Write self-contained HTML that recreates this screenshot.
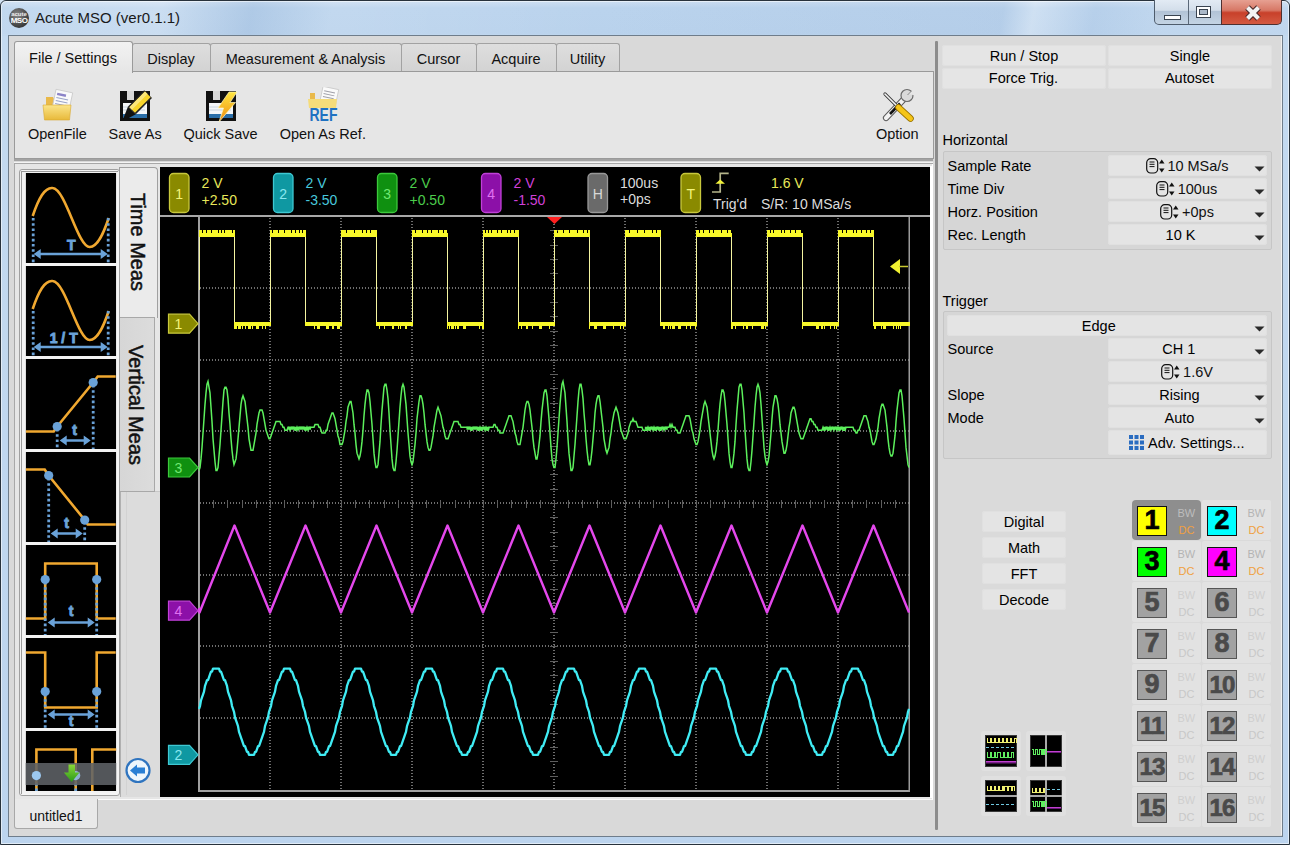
<!DOCTYPE html><html><head><meta charset="utf-8"><style>html,body{margin:0;padding:0;}body{width:1290px;height:845px;overflow:hidden;position:relative;font-family:"Liberation Sans",sans-serif;}svg text{font-family:"Liberation Sans",sans-serif;}</style></head><body><div style="position:absolute;left:0;top:0;width:1290px;height:845px;background:linear-gradient(180deg,#cfe0f2 0px,#bad3ed 8px,#b9d2ec 34px,#c4daf0 36px,#bcd4ee 845px);"></div>
<div style="position:absolute;left:0;top:0;width:1290px;height:35px;background:linear-gradient(100deg,rgba(255,255,255,0.1) 0px,rgba(255,255,255,0.25) 160px,rgba(150,180,215,0.3) 250px,rgba(255,255,255,0.12) 330px,rgba(255,255,255,0.0) 600px,rgba(170,195,225,0.3) 990px,rgba(255,255,255,0.3) 1020px,rgba(170,195,225,0.2) 1080px,rgba(255,255,255,0.1) 1150px);"></div>
<div style="position:absolute;left:0;top:0;width:1288px;height:843px;border:1px solid #28323c;border-radius:6px 6px 0 0;"></div>
<div style="position:absolute;left:1px;top:1px;width:1286px;height:841px;border:1px solid rgba(255,255,255,0.55);border-radius:5px 5px 0 0;"></div>
<div style="position:absolute;left:9px;top:8px;width:20px;height:20px;border-radius:50%;background:radial-gradient(circle at 40% 35%,#8a8a8a,#3a3a3a 70%);"></div>
<div style="position:absolute;left:9px;top:11px;width:20px;font-size:6px;line-height:6px;color:#eee;text-align:center;font-weight:bold;">acute</div>
<div style="position:absolute;left:9px;top:17px;width:20px;font-size:8px;line-height:8px;color:#fff;text-align:center;font-weight:bold;letter-spacing:-0.5px;">MSO</div>
<div style="position:absolute;left:35px;top:9.42px;font-size:15px;line-height:17.25px;color:#1a1a1a;white-space:pre;">Acute MSO (ver0.1.1)</div>
<div style="position:absolute;left:1154px;top:-1px;width:68px;height:25px;border:1px solid #4e5c6c;border-top:none;border-radius:0 0 0 5px;background:linear-gradient(180deg,#e4ecf5 0%,#d3deea 45%,#b2c3d6 50%,#c4d4e4 100%);"></div>
<div style="position:absolute;left:1188px;top:0px;width:1px;height:24px;background:#5a6878;"></div>
<div style="position:absolute;left:1221px;top:-1px;width:59px;height:25px;border:1px solid #4e3030;border-top:none;border-radius:0 0 5px 0;background:linear-gradient(180deg,#e8a496 0%,#d77866 45%,#c8402a 55%,#d45a42 100%);"></div>
<div style="position:absolute;left:1164px;top:15px;width:15px;height:3px;background:#fff;border:1px solid #3a4450;"></div>
<div style="position:absolute;left:1196px;top:6px;width:13px;height:10px;border:1px solid #3a4450;background:#fff;"></div>
<div style="position:absolute;left:1199px;top:9px;width:7px;height:4px;border:1px solid #3a4450;background:#aab8c8;"></div>
<svg style="position:absolute;left:1243px;top:4px;" width="20" height="18" viewBox="0 0 20 18"><path d="M4.5,3.5 L15.5,14.5 M15.5,3.5 L4.5,14.5" stroke="#4a2a2a" stroke-width="6.4" stroke-linecap="butt"/><path d="M4.5,3.5 L15.5,14.5 M15.5,3.5 L4.5,14.5" stroke="#f4f4f4" stroke-width="4.2" stroke-linecap="butt"/></svg>
<div style="position:absolute;left:8px;top:35px;width:1273px;height:800px;background:#d9d9d9;border:1px solid #6f7d8b;"></div>
<div style="position:absolute;left:14px;top:71px;width:918px;height:86px;background:#e6e6e6;border:1px solid #9a9a9a;"></div>
<div style="position:absolute;left:132px;top:43px;width:77px;height:27px;border:1px solid #a2a2a2;border-bottom:none;border-radius:3px 3px 0 0;background:linear-gradient(180deg,#dedede,#d3d3d3);"></div>
<div style="position:absolute;left:-29px;width:400px;text-align:center;top:50.88px;font-size:14.5px;line-height:16.67px;color:#111;white-space:pre;">Display</div>
<div style="position:absolute;left:210px;top:43px;width:190px;height:27px;border:1px solid #a2a2a2;border-bottom:none;border-radius:3px 3px 0 0;background:linear-gradient(180deg,#dedede,#d3d3d3);"></div>
<div style="position:absolute;left:105.5px;width:400px;text-align:center;top:50.88px;font-size:14.5px;line-height:16.67px;color:#111;white-space:pre;">Measurement &amp; Analysis</div>
<div style="position:absolute;left:401px;top:43px;width:74px;height:27px;border:1px solid #a2a2a2;border-bottom:none;border-radius:3px 3px 0 0;background:linear-gradient(180deg,#dedede,#d3d3d3);"></div>
<div style="position:absolute;left:238.5px;width:400px;text-align:center;top:50.88px;font-size:14.5px;line-height:16.67px;color:#111;white-space:pre;">Cursor</div>
<div style="position:absolute;left:476px;top:43px;width:79px;height:27px;border:1px solid #a2a2a2;border-bottom:none;border-radius:3px 3px 0 0;background:linear-gradient(180deg,#dedede,#d3d3d3);"></div>
<div style="position:absolute;left:316px;width:400px;text-align:center;top:50.88px;font-size:14.5px;line-height:16.67px;color:#111;white-space:pre;">Acquire</div>
<div style="position:absolute;left:556px;top:43px;width:62px;height:27px;border:1px solid #a2a2a2;border-bottom:none;border-radius:3px 3px 0 0;background:linear-gradient(180deg,#dedede,#d3d3d3);"></div>
<div style="position:absolute;left:387.5px;width:400px;text-align:center;top:50.88px;font-size:14.5px;line-height:16.67px;color:#111;white-space:pre;">Utility</div>
<div style="position:absolute;left:14px;top:41px;width:117px;height:31px;border:1px solid #9a9a9a;border-bottom:none;border-radius:3px 3px 0 0;background:linear-gradient(180deg,#f2f2f2,#e6e6e6);"></div>
<div style="position:absolute;left:-127px;width:400px;text-align:center;top:49.88px;font-size:14.5px;line-height:16.67px;color:#111;white-space:pre;">File / Settings</div>
<div style="position:absolute;left:-142.6px;width:400px;text-align:center;top:125.88px;font-size:14.5px;line-height:16.67px;color:#111;white-space:pre;">OpenFile</div>
<div style="position:absolute;left:-64.9px;width:400px;text-align:center;top:125.88px;font-size:14.5px;line-height:16.67px;color:#111;white-space:pre;">Save As</div>
<div style="position:absolute;left:20.5px;width:400px;text-align:center;top:125.88px;font-size:14.5px;line-height:16.67px;color:#111;white-space:pre;">Quick Save</div>
<div style="position:absolute;left:122.8px;width:400px;text-align:center;top:125.88px;font-size:14.5px;line-height:16.67px;color:#111;white-space:pre;">Open As Ref.</div>
<div style="position:absolute;left:697.3px;width:400px;text-align:center;top:125.88px;font-size:14.5px;line-height:16.67px;color:#111;white-space:pre;">Option</div>
<svg style="position:absolute;left:40px;top:88px;" width="36" height="36" viewBox="0 0 36 36">
<defs><linearGradient id="fold" x1="0" y1="0" x2="0" y2="1"><stop offset="0" stop-color="#fbe58a"/><stop offset="1" stop-color="#e8b93a"/></linearGradient></defs>
<path d="M6,9 h7 l1,2 h4 v8 h-12z" fill="#e9b94a"/>
<g transform="rotate(12 23 12)"><rect x="14" y="3" width="17" height="18" fill="#fafafa" stroke="#c8c8c8" stroke-width="0.8"/>
<rect x="16" y="6" width="9" height="2.5" fill="#8c84c8"/><path d="M16,11h12M16,14h12M16,17h12" stroke="#9aa4c8" stroke-width="1"/></g>
<path d="M3,17 h28 l-1.5,15 h-25z" fill="url(#fold)" stroke="#d9a830" stroke-width="0.6"/>
</svg>
<svg style="position:absolute;left:118px;top:89px;" width="36" height="36" viewBox="0 0 36 36">
<rect x="2" y="2" width="30" height="30" fill="#111"/>
<rect x="9" y="2" width="7" height="9" fill="#d8d8d8"/>
<rect x="5" y="14" width="24" height="15" fill="#f4f6f8"/>
<rect x="5" y="25" width="24" height="4" fill="#2a6ea8"/>
<path d="M5,18h22M5,21h22" stroke="#c8d4e0" stroke-width="1"/>
<path d="M26.2,1.2 L34,9 L17.8,25.2 L10,17.4z" fill="#222"/>
<path d="M27,2.6 L32.6,8.2 L17,23.8 L11.4,18.2z" fill="#f7d52c"/>
<path d="M27,2.6 L29.5,5.1 L13.9,20.7 L11.4,18.2z" fill="#fbe77a"/>
<path d="M10,17.4 L17.8,25.2 L9,30 L5.5,29z" fill="#111"/>
</svg>
<svg style="position:absolute;left:204px;top:89px;" width="36" height="36" viewBox="0 0 36 36">
<rect x="2" y="2" width="30" height="30" fill="#111"/>
<rect x="9" y="2" width="7" height="9" fill="#d8d8d8"/>
<rect x="5" y="14" width="24" height="15" fill="#f4f6f8"/>
<rect x="5" y="25" width="24" height="4" fill="#2a6ea8"/>
<path d="M5,18h22M5,21h22" stroke="#c8d4e0" stroke-width="1"/>
<defs><linearGradient id="bolt" x1="0" y1="0" x2="0" y2="1"><stop offset="0" stop-color="#ffe640"/><stop offset="1" stop-color="#f08c10"/></linearGradient></defs>
<path d="M25,3 L33,3 L26,13.5 L31.5,13.5 L15,33 L19.5,19 L14,19z" fill="url(#bolt)" stroke="#fff8c0" stroke-width="0.7"/>
</svg>
<svg style="position:absolute;left:306px;top:87px;" width="36" height="36" viewBox="0 0 36 36">
<path d="M4,6 h5 v6 h-5z" fill="#e9b94a"/>
<g transform="rotate(12 24 10)"><rect x="15" y="1" width="16" height="16" fill="#fafafa" stroke="#c8c8c8" stroke-width="0.8"/>
<path d="M17,5h11M17,8h11M17,11h11" stroke="#a0a0a8" stroke-width="1"/></g>
<path d="M2,12 h29 l-1,9 h-27z" fill="#f5dc7a"/>
<text x="17.5" y="34" text-anchor="middle" font-family="Liberation Sans" font-weight="bold" font-size="18" fill="#1f72c2" textLength="28" lengthAdjust="spacingAndGlyphs">REF</text>
</svg>
<svg style="position:absolute;left:878px;top:88px;" width="38" height="36" viewBox="0 0 38 36">
<path d="M26,11 L8,30" stroke="#5a5a5a" stroke-width="6.2" stroke-linecap="round"/>
<path d="M26,11 L8,30" stroke="#f2f2f2" stroke-width="4.2" stroke-linecap="round"/>
<path d="M22,15.5 L12,26" stroke="#111" stroke-width="2.6"/>
<circle cx="29" cy="7.5" r="6" fill="#dadada" stroke="#6a6a6a" stroke-width="1.2"/>
<path d="M30.5,6 L37,-0.5 L39,8 z" fill="#e6e6e6"/>
<path d="M29.5,7 l4,-4" stroke="#8a8a8a" stroke-width="1"/>
<path d="M7,6 L21,20" stroke="#3a3a3a" stroke-width="3.2" stroke-linecap="round"/>
<path d="M7,6 L21,20" stroke="#f4f4f4" stroke-width="1.6" stroke-linecap="round"/>
<path d="M20.5,19.5 L32.5,30.5" stroke="#9a7400" stroke-width="6.6" stroke-linecap="round"/>
<path d="M20.5,19.5 L32.5,30.5" stroke="#f5c518" stroke-width="5" stroke-linecap="round"/>
</svg>
<div style="position:absolute;left:14px;top:159px;width:919px;height:2px;background:#a3a3a3;"></div>
<div style="position:absolute;left:14px;top:162px;width:919px;height:1px;background:#f4f4f4;"></div>
<div style="position:absolute;left:14px;top:163px;width:917px;height:635px;border:1px solid #a8a8a8;background:#e6e6e6;"></div>
<div style="position:absolute;left:15px;top:164px;width:917px;height:635px;border-right:1px solid #fff;border-bottom:1px solid #fafafa;"></div>
<div style="position:absolute;left:935px;top:41px;width:3px;height:789px;background:#8c8c8c;border-radius:1px;"></div>
<div style="position:absolute;left:19px;top:169px;width:99px;height:625px;border:1px solid #a0a0a0;border-radius:3px;background:#f4f4f4;"></div>
<div style="position:absolute;left:21px;top:171px;width:96px;height:622px;border-left:1px solid #9a9a9a;border-top:1px solid #9a9a9a;"></div>
<svg style="position:absolute;left:22px;top:172px;" width="95" height="621" viewBox="0 1 95 621"><rect x="0" y="0" width="96" height="622" fill="#f2f2f2"/><svg x="3.7" y="2" width="90.5" height="90" viewBox="0 0 90.5 90"><rect width="90.5" height="90" fill="#000"/><path d="M7,43 C13,25 19,14 27,15 C40,16 52,74 64,74 C72,74 78,60 83,45" fill="none" stroke="#f0a830" stroke-width="2.6"/><path d="M7.5,45 V90" stroke="#6aa2d8" stroke-width="2.8" stroke-dasharray="2.6,2.6"/><path d="M82.5,45 V90" stroke="#6aa2d8" stroke-width="2.8" stroke-dasharray="2.6,2.6"/><path d="M12,81 H78" stroke="#6aa2d8" stroke-width="2.6"/><path d="M8,81 l7,-5 v10z M82,81 l-7,-5 v10z" fill="#6aa2d8"/><text x="45.5" y="77" text-anchor="middle" font-family="Liberation Sans" font-weight="bold" font-size="14" fill="#6aa2d8" stroke="#6aa2d8" stroke-width="0.9">T</text></svg><svg x="3.7" y="95" width="90.5" height="90" viewBox="0 0 90.5 90"><rect width="90.5" height="90" fill="#000"/><path d="M7,43 C13,25 19,14 27,15 C40,16 52,74 64,74 C72,74 78,60 83,45" fill="none" stroke="#f0a830" stroke-width="2.6"/><path d="M7.5,45 V90" stroke="#6aa2d8" stroke-width="2.8" stroke-dasharray="2.6,2.6"/><path d="M82.5,45 V90" stroke="#6aa2d8" stroke-width="2.8" stroke-dasharray="2.6,2.6"/><path d="M12,81 H78" stroke="#6aa2d8" stroke-width="2.6"/><path d="M8,81 l7,-5 v10z M82,81 l-7,-5 v10z" fill="#6aa2d8"/><text x="38" y="77" text-anchor="middle" font-family="Liberation Sans" font-weight="bold" font-size="14" fill="#6aa2d8" stroke="#6aa2d8" stroke-width="0.9">1 / T</text></svg><svg x="3.7" y="188" width="90.5" height="90" viewBox="0 0 90.5 90"><rect width="90.5" height="90" fill="#000"/><path d="M0,72.5 H28 L31.5,67.5 L67.5,23.5 L72,17.5 H90" fill="none" stroke="#f0a830" stroke-width="2.6"/><path d="M31.5,70 V90" stroke="#6aa2d8" stroke-width="2.8" stroke-dasharray="2.6,2.6"/><path d="M67.5,26 V90" stroke="#6aa2d8" stroke-width="2.8" stroke-dasharray="2.6,2.6"/><circle cx="31.5" cy="67.5" r="4.6" fill="#6aa2d8"/><circle cx="67.5" cy="23.5" r="4.6" fill="#6aa2d8"/><path d="M38,81.5 H61" stroke="#6aa2d8" stroke-width="2.6"/><path d="M34,81.5 l7,-5 v10z M65,81.5 l-7,-5 v10z" fill="#6aa2d8"/><text x="49" y="76" text-anchor="middle" font-family="Liberation Sans" font-weight="bold" font-size="14" fill="#6aa2d8" stroke="#6aa2d8" stroke-width="0.9">t</text></svg><svg x="3.7" y="281" width="90.5" height="90" viewBox="0 0 90.5 90"><rect width="90.5" height="90" fill="#000"/><path d="M0,17.5 H19 L23,23.5 L59,68 L62,72.5 H90" fill="none" stroke="#f0a830" stroke-width="2.6"/><path d="M23,26 V90" stroke="#6aa2d8" stroke-width="2.8" stroke-dasharray="2.6,2.6"/><path d="M59,70 V90" stroke="#6aa2d8" stroke-width="2.8" stroke-dasharray="2.6,2.6"/><circle cx="23" cy="23.5" r="4.6" fill="#6aa2d8"/><circle cx="59" cy="68" r="4.6" fill="#6aa2d8"/><path d="M29,81.5 H53" stroke="#6aa2d8" stroke-width="2.6"/><path d="M25,81.5 l7,-5 v10z M57,81.5 l-7,-5 v10z" fill="#6aa2d8"/><text x="41" y="76" text-anchor="middle" font-family="Liberation Sans" font-weight="bold" font-size="14" fill="#6aa2d8" stroke="#6aa2d8" stroke-width="0.9">t</text></svg><svg x="3.7" y="374" width="90.5" height="90" viewBox="0 0 90.5 90"><rect width="90.5" height="90" fill="#000"/><path d="M0,73.5 H19.5 V18.5 H71 V73.5 H90" fill="none" stroke="#f0a830" stroke-width="2.6"/><path d="M19.5,37 V90" stroke="#6aa2d8" stroke-width="2.8" stroke-dasharray="2.6,2.6"/><path d="M71,37 V90" stroke="#6aa2d8" stroke-width="2.8" stroke-dasharray="2.6,2.6"/><circle cx="19.5" cy="34.5" r="4.6" fill="#6aa2d8"/><circle cx="71" cy="34.5" r="4.6" fill="#6aa2d8"/><path d="M26,77.5 H65" stroke="#6aa2d8" stroke-width="2.6"/><path d="M22,77.5 l7,-5 v10z M69,77.5 l-7,-5 v10z" fill="#6aa2d8"/><text x="45.5" y="71" text-anchor="middle" font-family="Liberation Sans" font-weight="bold" font-size="14" fill="#6aa2d8" stroke="#6aa2d8" stroke-width="0.9">t</text></svg><svg x="3.7" y="467" width="90.5" height="90" viewBox="0 0 90.5 90"><rect width="90.5" height="90" fill="#000"/><path d="M0,14.5 H19.5 V69.5 H71 V14.5 H90" fill="none" stroke="#f0a830" stroke-width="2.6"/><path d="M19.5,56 V90" stroke="#6aa2d8" stroke-width="2.8" stroke-dasharray="2.6,2.6"/><path d="M71,56 V90" stroke="#6aa2d8" stroke-width="2.8" stroke-dasharray="2.6,2.6"/><circle cx="19.5" cy="53.5" r="4.6" fill="#6aa2d8"/><circle cx="71" cy="53.5" r="4.6" fill="#6aa2d8"/><path d="M26,76.5 H65" stroke="#6aa2d8" stroke-width="2.6"/><path d="M22,76.5 l7,-5 v10z M69,76.5 l-7,-5 v10z" fill="#6aa2d8"/><text x="45.5" y="88" text-anchor="middle" font-family="Liberation Sans" font-weight="bold" font-size="14" fill="#6aa2d8" stroke="#6aa2d8" stroke-width="0.9">t</text></svg><svg x="3.7" y="560" width="90.5" height="60" viewBox="0 0 90.5 60"><rect width="90.5" height="60" fill="#000"/><path d="M10.7,90 V18.5 H50 V90 M66.6,90 V18.5 H92" fill="none" stroke="#f0a830" stroke-width="2.6"/><path d="M10.7,47 V90" stroke="#6aa2d8" stroke-width="2.8" stroke-dasharray="2.6,2.6"/><path d="M50,47 V90" stroke="#6aa2d8" stroke-width="2.8" stroke-dasharray="2.6,2.6"/></svg><rect x="3.7" y="592" width="90.5" height="22" fill="#5e6266" fill-opacity="0.88"/><circle cx="14.4" cy="604.6" r="4.6" fill="#9cc8f0"/><circle cx="53.7" cy="604.6" r="4.6" fill="#9cc8f0" fill-opacity="0.8"/><defs><linearGradient id="garr" x1="0" y1="0" x2="0" y2="1"><stop offset="0" stop-color="#8ad838"/><stop offset="1" stop-color="#2a9a18"/></linearGradient></defs><path d="M46.5,593.5 h6.5 v8 h4.5 l-7.8,9.5 l-7.8,-9.5 h4.6z" fill="url(#garr)"/></svg>
<div style="position:absolute;left:119px;top:167px;width:37px;height:150px;border:1px solid #a0a0a0;border-bottom:none;border-radius:0 4px 0 0;background:#ebebeb;"></div>
<div style="position:absolute;left:120px;top:491px;width:39px;height:305px;border-left:1px solid #b0b0b0;border-top:1px solid #c8c8c8;background:#dcdcdc;"></div>
<div style="position:absolute;left:126px;top:492px;width:1px;height:303px;background:#d2d2d2;"></div>
<div style="position:absolute;left:120px;top:317px;width:34px;height:173px;border:1px solid #a8a8a8;border-left:none;background:linear-gradient(90deg,#d6d6d6,#dcdcdc);"></div>
<div style="position:absolute;left:137.5px;top:242px;width:0;height:0;"><div style="position:absolute;left:-60px;top:-12px;width:120px;text-align:center;transform:rotate(90deg);font-size:20px;line-height:24px;color:#111;white-space:pre;-webkit-text-stroke:0.5px #111;">Time Meas</div></div>
<div style="position:absolute;left:136px;top:405px;width:0;height:0;"><div style="position:absolute;left:-80px;top:-12px;width:160px;text-align:center;transform:rotate(90deg);font-size:20px;line-height:24px;color:#111;white-space:pre;-webkit-text-stroke:0.5px #111;">Vertical Meas</div></div>
<svg style="position:absolute;left:124px;top:757px;" width="28" height="28" viewBox="0 0 28 28">
<circle cx="14" cy="13.5" r="11.5" fill="#eef6fc" stroke="#2f74bf" stroke-width="2.2"/>
<path d="M6,13.5 L13,7.5 V10.5 H21 V16.5 H13 V19.5z" fill="#2a7fd4"/>
</svg>
<div style="position:absolute;left:14px;top:799px;width:82px;height:29px;border:1px solid #a8a8a8;border-top:none;border-radius:0 0 3px 3px;background:#e9e9e9;"></div>
<div style="position:absolute;left:29.5px;top:808.33px;font-size:14px;line-height:16.1px;color:#111;white-space:pre;">untitled1</div>
<svg style="position:absolute;left:160px;top:167px;" width="770" height="630" viewBox="160 167 770 630"><rect x="160" y="167" width="770" height="630" fill="#000"/><rect x="169.5" y="173.5" width="19.5" height="39" rx="4" fill="#8a8a00" stroke="#c8c83c" stroke-width="1.3"/><text x="179.25" y="198.5" text-anchor="middle" font-family="Liberation Sans" font-size="14" fill="#f4f47a">1</text><text x="201.5" y="188" font-family="Liberation Sans" font-size="14" fill="#e8e85a" xml:space="preserve">2 V</text><text x="201.5" y="204.5" font-family="Liberation Sans" font-size="14" fill="#e8e85a" xml:space="preserve">+2.50</text><rect x="273.5" y="173.5" width="19.5" height="39" rx="4" fill="#0f98a2" stroke="#3ec8d2" stroke-width="1.3"/><text x="283.25" y="198.5" text-anchor="middle" font-family="Liberation Sans" font-size="14" fill="#8ae8f0">2</text><text x="305.5" y="188" font-family="Liberation Sans" font-size="14" fill="#48c8dc" xml:space="preserve">2 V</text><text x="305.5" y="204.5" font-family="Liberation Sans" font-size="14" fill="#48c8dc" xml:space="preserve">-3.50</text><rect x="377.5" y="173.5" width="19.5" height="39" rx="4" fill="#0f9010" stroke="#3cc83c" stroke-width="1.3"/><text x="387.25" y="198.5" text-anchor="middle" font-family="Liberation Sans" font-size="14" fill="#70e870">3</text><text x="409.5" y="188" font-family="Liberation Sans" font-size="14" fill="#4ccc4c" xml:space="preserve">2 V</text><text x="409.5" y="204.5" font-family="Liberation Sans" font-size="14" fill="#4ccc4c" xml:space="preserve">+0.50</text><rect x="481.5" y="173.5" width="19.5" height="39" rx="4" fill="#8c10a8" stroke="#c040d8" stroke-width="1.3"/><text x="491.25" y="198.5" text-anchor="middle" font-family="Liberation Sans" font-size="14" fill="#e070f0">4</text><text x="513.5" y="188" font-family="Liberation Sans" font-size="14" fill="#d040d8" xml:space="preserve">2 V</text><text x="513.5" y="204.5" font-family="Liberation Sans" font-size="14" fill="#d040d8" xml:space="preserve">-1.50</text><rect x="588.0" y="173.5" width="19.5" height="39" rx="4" fill="#6a6a6a" stroke="#989898" stroke-width="1.3"/><text x="597.75" y="198.5" text-anchor="middle" font-family="Liberation Sans" font-size="14" fill="#d8d8d8">H</text><text x="620" y="188" font-family="Liberation Sans" font-size="14" fill="#dcdcdc" xml:space="preserve">100us</text><text x="620" y="204" font-family="Liberation Sans" font-size="14" fill="#dcdcdc" xml:space="preserve">+0ps</text><rect x="681.0" y="173.5" width="19.5" height="39" rx="4" fill="#8a8a00" stroke="#c8c83c" stroke-width="1.3"/><text x="690.75" y="198.5" text-anchor="middle" font-family="Liberation Sans" font-size="14" fill="#f4f47a">T</text><path d="M712,192 h8.2 v-18.7 h8.5" fill="none" stroke="#b4b48a" stroke-width="1.7"/><path d="M720.2,179.5 l-4.8,4.2 h9.6z" fill="#f2f23a"/><text x="713" y="209" font-family="Liberation Sans" font-size="14" fill="#dcdcdc" xml:space="preserve">Trig'd</text><text x="771" y="188" font-family="Liberation Sans" font-size="14" fill="#e8e85a" xml:space="preserve">1.6 V</text><text x="761" y="209" font-family="Liberation Sans" font-size="14" fill="#dcdcdc" xml:space="preserve">S/R: 10 MSa/s</text><rect x="160" y="215" width="770" height="2" fill="#a8a8a8"/><path d="M270,218V790M341,218V790M412,218V790M483,218V790M554,218V790M625,218V790M696,218V790M767,218V790M838,218V790" stroke="#6e6e6e" stroke-width="2" stroke-dasharray="1,2" shape-rendering="crispEdges"/><path d="M200,288H909M200,360H909M200,431H909M200,503H909M200,575H909M200,646H909M200,718H909" stroke="#6e6e6e" stroke-width="2" stroke-dasharray="1,2" shape-rendering="crispEdges"/><path d="M550,230.5h8M550,245.5h8M550,259.5h8M550,273.5h8M550,288.5h8M550,302.5h8M550,316.5h8M550,331.5h8M550,345.5h8M550,360.5h8M550,374.5h8M550,388.5h8M550,403.5h8M550,417.5h8M550,431.5h8M550,446.5h8M550,460.5h8M550,474.5h8M550,489.5h8M550,503.5h8M550,517.5h8M550,532.5h8M550,546.5h8M550,560.5h8M550,575.5h8M550,589.5h8M550,603.5h8M550,618.5h8M550,632.5h8M550,646.5h8M550,661.5h8M550,675.5h8M550,690.5h8M550,704.5h8M550,718.5h8M550,733.5h8M550,747.5h8M550,761.5h8M550,776.5h8M213.5,500v8M227.5,500v8M242.5,500v8M256.5,500v8M270.5,500v8M284.5,500v8M298.5,500v8M313.5,500v8M327.5,500v8M341.5,500v8M355.5,500v8M369.5,500v8M384.5,500v8M398.5,500v8M412.5,500v8M426.5,500v8M440.5,500v8M455.5,500v8M469.5,500v8M483.5,500v8M497.5,500v8M511.5,500v8M526.5,500v8M540.5,500v8M554.5,500v8M568.5,500v8M582.5,500v8M597.5,500v8M611.5,500v8M625.5,500v8M639.5,500v8M653.5,500v8M668.5,500v8M682.5,500v8M696.5,500v8M710.5,500v8M724.5,500v8M739.5,500v8M753.5,500v8M767.5,500v8M781.5,500v8M795.5,500v8M810.5,500v8M824.5,500v8M838.5,500v8M852.5,500v8M866.5,500v8M881.5,500v8M895.5,500v8" stroke="#5e5e5e" stroke-width="1" shape-rendering="crispEdges"/><rect x="198" y="217" width="2" height="575" fill="#a0a0a0"/><rect x="198" y="790" width="712" height="2" fill="#a0a0a0"/><rect x="908.5" y="217" width="1.5" height="575" fill="#9a9a9a"/><path d="M547,217 h15 l-7.5,7z" fill="#ff2020"/><path d="M199,608L199.5,612.5 234.5,525.5 270,612.5 305.5,525.5 341,612.5 376.5,525.5 412,612.5 447.5,525.5 483,612.5 518.5,525.5 554,612.5 589.5,525.5 625,612.5 660.5,525.5 696,612.5 731.5,525.5 767,612.5 802.5,525.5 838,612.5 873.5,525.5 909,612.5" fill="none" stroke="#e448ec" stroke-width="2.4" stroke-linejoin="round"/><path d="M199,708.89L200,706.02 201,700.28 202,697.41 203,694.54 204,691.67 205,685.93 206,683.06 207,680.19 208,680.19 209,677.32 210,674.45 211,671.58 212,671.58 213,668.71 214,668.71 215,668.71 216,668.71 217,668.71 218,668.71 219,668.71 220,671.58 221,671.58 222,674.45 223,677.32 224,680.19 225,680.19 226,683.06 227,685.93 228,691.67 229,694.54 230,697.41 231,700.28 232,706.02 233,708.89 234,711.76 235,717.5 236,720.37 237,723.24 238,726.11 239,731.85 240,734.72 241,737.59 242,740.46 243,743.33 244,746.2 245,746.2 246,749.07 247,751.94 248,751.94 249,754.81 250,754.81 251,754.81 252,754.81 253,754.81 254,754.81 255,751.94 256,751.94 257,749.07 258,746.2 259,746.2 260,743.33 261,740.46 262,737.59 263,734.72 264,731.85 265,726.11 266,723.24 267,720.37 268,717.5 269,711.76 270,708.89 271,706.02 272,700.28 273,697.41 274,694.54 275,691.67 276,685.93 277,683.06 278,680.19 279,680.19 280,677.32 281,674.45 282,671.58 283,671.58 284,668.71 285,668.71 286,668.71 287,668.71 288,668.71 289,668.71 290,668.71 291,671.58 292,671.58 293,674.45 294,677.32 295,680.19 296,680.19 297,683.06 298,685.93 299,691.67 300,694.54 301,697.41 302,700.28 303,706.02 304,708.89 305,711.76 306,717.5 307,720.37 308,723.24 309,726.11 310,731.85 311,734.72 312,737.59 313,740.46 314,743.33 315,746.2 316,746.2 317,749.07 318,751.94 319,751.94 320,754.81 321,754.81 322,754.81 323,754.81 324,754.81 325,754.81 326,751.94 327,751.94 328,749.07 329,746.2 330,746.2 331,743.33 332,740.46 333,737.59 334,734.72 335,731.85 336,726.11 337,723.24 338,720.37 339,717.5 340,711.76 341,708.89 342,706.02 343,700.28 344,697.41 345,694.54 346,691.67 347,685.93 348,683.06 349,680.19 350,680.19 351,677.32 352,674.45 353,671.58 354,671.58 355,668.71 356,668.71 357,668.71 358,668.71 359,668.71 360,668.71 361,668.71 362,671.58 363,671.58 364,674.45 365,677.32 366,680.19 367,680.19 368,683.06 369,685.93 370,691.67 371,694.54 372,697.41 373,700.28 374,706.02 375,708.89 376,711.76 377,717.5 378,720.37 379,723.24 380,726.11 381,731.85 382,734.72 383,737.59 384,740.46 385,743.33 386,746.2 387,746.2 388,749.07 389,751.94 390,751.94 391,754.81 392,754.81 393,754.81 394,754.81 395,754.81 396,754.81 397,751.94 398,751.94 399,749.07 400,746.2 401,746.2 402,743.33 403,740.46 404,737.59 405,734.72 406,731.85 407,726.11 408,723.24 409,720.37 410,717.5 411,711.76 412,708.89 413,706.02 414,700.28 415,697.41 416,694.54 417,691.67 418,685.93 419,683.06 420,680.19 421,680.19 422,677.32 423,674.45 424,671.58 425,671.58 426,668.71 427,668.71 428,668.71 429,668.71 430,668.71 431,668.71 432,668.71 433,671.58 434,671.58 435,674.45 436,677.32 437,680.19 438,680.19 439,683.06 440,685.93 441,691.67 442,694.54 443,697.41 444,700.28 445,706.02 446,708.89 447,711.76 448,717.5 449,720.37 450,723.24 451,726.11 452,731.85 453,734.72 454,737.59 455,740.46 456,743.33 457,746.2 458,746.2 459,749.07 460,751.94 461,751.94 462,754.81 463,754.81 464,754.81 465,754.81 466,754.81 467,754.81 468,751.94 469,751.94 470,749.07 471,746.2 472,746.2 473,743.33 474,740.46 475,737.59 476,734.72 477,731.85 478,726.11 479,723.24 480,720.37 481,717.5 482,711.76 483,708.89 484,706.02 485,700.28 486,697.41 487,694.54 488,691.67 489,685.93 490,683.06 491,680.19 492,680.19 493,677.32 494,674.45 495,671.58 496,671.58 497,668.71 498,668.71 499,668.71 500,668.71 501,668.71 502,668.71 503,668.71 504,671.58 505,671.58 506,674.45 507,677.32 508,680.19 509,680.19 510,683.06 511,685.93 512,691.67 513,694.54 514,697.41 515,700.28 516,706.02 517,708.89 518,711.76 519,717.5 520,720.37 521,723.24 522,726.11 523,731.85 524,734.72 525,737.59 526,740.46 527,743.33 528,746.2 529,746.2 530,749.07 531,751.94 532,751.94 533,754.81 534,754.81 535,754.81 536,754.81 537,754.81 538,754.81 539,751.94 540,751.94 541,749.07 542,746.2 543,746.2 544,743.33 545,740.46 546,737.59 547,734.72 548,731.85 549,726.11 550,723.24 551,720.37 552,717.5 553,711.76 554,708.89 555,706.02 556,700.28 557,697.41 558,694.54 559,691.67 560,685.93 561,683.06 562,680.19 563,680.19 564,677.32 565,674.45 566,671.58 567,671.58 568,668.71 569,668.71 570,668.71 571,668.71 572,668.71 573,668.71 574,668.71 575,671.58 576,671.58 577,674.45 578,677.32 579,680.19 580,680.19 581,683.06 582,685.93 583,691.67 584,694.54 585,697.41 586,700.28 587,706.02 588,708.89 589,711.76 590,717.5 591,720.37 592,723.24 593,726.11 594,731.85 595,734.72 596,737.59 597,740.46 598,743.33 599,746.2 600,746.2 601,749.07 602,751.94 603,751.94 604,754.81 605,754.81 606,754.81 607,754.81 608,754.81 609,754.81 610,751.94 611,751.94 612,749.07 613,746.2 614,746.2 615,743.33 616,740.46 617,737.59 618,734.72 619,731.85 620,726.11 621,723.24 622,720.37 623,717.5 624,711.76 625,708.89 626,706.02 627,700.28 628,697.41 629,694.54 630,691.67 631,685.93 632,683.06 633,680.19 634,680.19 635,677.32 636,674.45 637,671.58 638,671.58 639,668.71 640,668.71 641,668.71 642,668.71 643,668.71 644,668.71 645,668.71 646,671.58 647,671.58 648,674.45 649,677.32 650,680.19 651,680.19 652,683.06 653,685.93 654,691.67 655,694.54 656,697.41 657,700.28 658,706.02 659,708.89 660,711.76 661,717.5 662,720.37 663,723.24 664,726.11 665,731.85 666,734.72 667,737.59 668,740.46 669,743.33 670,746.2 671,746.2 672,749.07 673,751.94 674,751.94 675,754.81 676,754.81 677,754.81 678,754.81 679,754.81 680,754.81 681,751.94 682,751.94 683,749.07 684,746.2 685,746.2 686,743.33 687,740.46 688,737.59 689,734.72 690,731.85 691,726.11 692,723.24 693,720.37 694,717.5 695,711.76 696,708.89 697,706.02 698,700.28 699,697.41 700,694.54 701,691.67 702,685.93 703,683.06 704,680.19 705,680.19 706,677.32 707,674.45 708,671.58 709,671.58 710,668.71 711,668.71 712,668.71 713,668.71 714,668.71 715,668.71 716,668.71 717,671.58 718,671.58 719,674.45 720,677.32 721,680.19 722,680.19 723,683.06 724,685.93 725,691.67 726,694.54 727,697.41 728,700.28 729,706.02 730,708.89 731,711.76 732,717.5 733,720.37 734,723.24 735,726.11 736,731.85 737,734.72 738,737.59 739,740.46 740,743.33 741,746.2 742,746.2 743,749.07 744,751.94 745,751.94 746,754.81 747,754.81 748,754.81 749,754.81 750,754.81 751,754.81 752,751.94 753,751.94 754,749.07 755,746.2 756,746.2 757,743.33 758,740.46 759,737.59 760,734.72 761,731.85 762,726.11 763,723.24 764,720.37 765,717.5 766,711.76 767,708.89 768,706.02 769,700.28 770,697.41 771,694.54 772,691.67 773,685.93 774,683.06 775,680.19 776,680.19 777,677.32 778,674.45 779,671.58 780,671.58 781,668.71 782,668.71 783,668.71 784,668.71 785,668.71 786,668.71 787,668.71 788,671.58 789,671.58 790,674.45 791,677.32 792,680.19 793,680.19 794,683.06 795,685.93 796,691.67 797,694.54 798,697.41 799,700.28 800,706.02 801,708.89 802,711.76 803,717.5 804,720.37 805,723.24 806,726.11 807,731.85 808,734.72 809,737.59 810,740.46 811,743.33 812,746.2 813,746.2 814,749.07 815,751.94 816,751.94 817,754.81 818,754.81 819,754.81 820,754.81 821,754.81 822,754.81 823,751.94 824,751.94 825,749.07 826,746.2 827,746.2 828,743.33 829,740.46 830,737.59 831,734.72 832,731.85 833,726.11 834,723.24 835,720.37 836,717.5 837,711.76 838,708.89 839,706.02 840,700.28 841,697.41 842,694.54 843,691.67 844,685.93 845,683.06 846,680.19 847,680.19 848,677.32 849,674.45 850,671.58 851,671.58 852,668.71 853,668.71 854,668.71 855,668.71 856,668.71 857,668.71 858,668.71 859,671.58 860,671.58 861,674.45 862,677.32 863,680.19 864,680.19 865,683.06 866,685.93 867,691.67 868,694.54 869,697.41 870,700.28 871,706.02 872,708.89 873,711.76 874,717.5 875,720.37 876,723.24 877,726.11 878,731.85 879,734.72 880,737.59 881,740.46 882,743.33 883,746.2 884,746.2 885,749.07 886,751.94 887,751.94 888,754.81 889,754.81 890,754.81 891,754.81 892,754.81 893,754.81 894,751.94 895,751.94 896,749.07 897,746.2 898,746.2 899,743.33 900,740.46 901,737.59 902,734.72 903,731.85 904,726.11 905,723.24 906,720.37 907,717.5 908,711.76 909,708.89" fill="none" stroke="#40ecf4" stroke-width="2.3" stroke-linejoin="round"/><path d="M199,470.38L200,467.51 201,458.9 202,447.42 203,433.07 204,418.72 205,404.37 206,392.89 207,384.28 208,381.41 209,387.15 210,392.89 211,407.24 212,421.59 213,438.81 214,450.29 215,461.77 216,470.38 217,470.38 218,467.51 219,456.03 220,444.55 221,430.2 222,415.85 223,401.5 224,390.02 225,387.15 226,387.15 227,390.02 228,398.63 229,412.98 230,424.46 231,438.81 232,450.29 233,458.9 234,464.64 235,461.77 236,458.9 237,450.29 238,438.81 239,427.33 240,415.85 241,404.37 242,398.63 243,395.76 244,398.63 245,401.5 246,410.11 247,418.72 248,427.33 249,438.81 250,444.55 251,450.29 252,450.29 253,450.29 254,444.55 255,438.81 256,433.07 257,424.46 258,418.72 259,412.98 260,410.11 261,410.11 262,410.11 263,412.98 264,418.72 265,424.46 266,430.2 267,433.07 268,435.94 269,438.81 270,438.81 271,435.94 272,433.07 273,430.2 274,427.33 275,424.46 276,421.59 277,421.59 278,421.59 279,421.59 280,421.59 281,424.46 282,424.46 283,427.33 284,427.33 285,430.2 286,430.2 287,430.2 288,427.33 289,427.33 290,430.2 291,427.33 292,427.33 293,427.33 294,427.33 295,430.2 296,430.2 297,427.33 298,430.2 299,427.33 300,427.33 301,427.33 302,427.33 303,427.33 304,427.33 305,430.2 306,430.2 307,427.33 308,430.2 309,427.33 310,427.33 311,427.33 312,427.33 313,427.33 314,427.33 315,424.46 316,424.46 317,424.46 318,424.46 319,427.33 320,427.33 321,430.2 322,433.07 323,433.07 324,433.07 325,433.07 326,430.2 327,430.2 328,424.46 329,421.59 330,418.72 331,415.85 332,412.98 333,412.98 334,415.85 335,418.72 336,424.46 337,430.2 338,435.94 339,438.81 340,444.55 341,444.55 342,444.55 343,441.68 344,435.94 345,430.2 346,421.59 347,415.85 348,407.24 349,404.37 350,401.5 351,401.5 352,407.24 353,412.98 354,424.46 355,433.07 356,444.55 357,453.16 358,456.03 359,458.9 360,456.03 361,450.29 362,441.68 363,430.2 364,415.85 365,404.37 366,395.76 367,390.02 368,390.02 369,392.89 370,401.5 371,412.98 372,424.46 373,438.81 374,453.16 375,461.77 376,467.51 377,467.51 378,464.64 379,453.16 380,441.68 381,424.46 382,410.11 383,398.63 384,387.15 385,384.28 386,384.28 387,390.02 388,398.63 389,412.98 390,430.2 391,444.55 392,458.9 393,467.51 394,470.38 395,470.38 396,461.77 397,450.29 398,435.94 399,421.59 400,407.24 401,395.76 402,387.15 403,384.28 404,387.15 405,395.76 406,404.37 407,418.72 408,433.07 409,444.55 410,456.03 411,461.77 412,464.64 413,461.77 414,453.16 415,444.55 416,433.07 417,418.72 418,410.11 419,401.5 420,395.76 421,395.76 422,398.63 423,404.37 424,412.98 425,424.46 426,433.07 427,441.68 428,447.42 429,450.29 430,450.29 431,447.42 432,441.68 433,435.94 434,427.33 435,421.59 436,415.85 437,410.11 438,407.24 439,410.11 440,412.98 441,415.85 442,421.59 443,427.33 444,430.2 445,435.94 446,438.81 447,438.81 448,438.81 449,435.94 450,433.07 451,430.2 452,427.33 453,424.46 454,421.59 455,421.59 456,421.59 457,421.59 458,421.59 459,424.46 460,424.46 461,427.33 462,427.33 463,427.33 464,427.33 465,427.33 466,427.33 467,427.33 468,427.33 469,427.33 470,427.33 471,430.2 472,430.2 473,427.33 474,427.33 475,427.33 476,427.33 477,427.33 478,430.2 479,430.2 480,427.33 481,430.2 482,430.2 483,427.33 484,427.33 485,430.2 486,427.33 487,430.2 488,430.2 489,427.33 490,427.33 491,427.33 492,427.33 493,427.33 494,424.46 495,424.46 496,427.33 497,427.33 498,430.2 499,430.2 500,433.07 501,433.07 502,433.07 503,433.07 504,430.2 505,427.33 506,424.46 507,421.59 508,418.72 509,415.85 510,415.85 511,415.85 512,418.72 513,421.59 514,427.33 515,433.07 516,435.94 517,441.68 518,444.55 519,444.55 520,444.55 521,438.81 522,433.07 523,427.33 524,418.72 525,410.11 526,404.37 527,401.5 528,401.5 529,404.37 530,410.11 531,418.72 532,427.33 533,438.81 534,447.42 535,453.16 536,458.9 537,458.9 538,453.16 539,444.55 540,435.94 541,421.59 542,410.11 543,401.5 544,392.89 545,390.02 546,390.02 547,395.76 548,407.24 549,418.72 550,433.07 551,447.42 552,458.9 553,464.64 554,467.51 555,467.51 556,458.9 557,447.42 558,433.07 559,418.72 560,404.37 561,392.89 562,384.28 563,381.41 564,387.15 565,392.89 566,407.24 567,421.59 568,438.81 569,453.16 570,461.77 571,470.38 572,470.38 573,467.51 574,456.03 575,444.55 576,430.2 577,415.85 578,401.5 579,390.02 580,384.28 581,384.28 582,390.02 583,398.63 584,412.98 585,424.46 586,438.81 587,450.29 588,458.9 589,464.64 590,464.64 591,458.9 592,450.29 593,438.81 594,427.33 595,412.98 596,404.37 597,398.63 598,395.76 599,395.76 600,401.5 601,410.11 602,418.72 603,427.33 604,438.81 605,444.55 606,450.29 607,453.16 608,450.29 609,447.42 610,438.81 611,433.07 612,424.46 613,418.72 614,412.98 615,410.11 616,407.24 617,410.11 618,412.98 619,418.72 620,424.46 621,430.2 622,433.07 623,435.94 624,438.81 625,438.81 626,438.81 627,435.94 628,433.07 629,427.33 630,424.46 631,421.59 632,421.59 633,418.72 634,421.59 635,421.59 636,421.59 637,424.46 638,427.33 639,427.33 640,427.33 641,427.33 642,427.33 643,430.2 644,430.2 645,430.2 646,430.2 647,430.2 648,427.33 649,430.2 650,430.2 651,427.33 652,427.33 653,430.2 654,427.33 655,430.2 656,430.2 657,427.33 658,427.33 659,430.2 660,430.2 661,430.2 662,427.33 663,427.33 664,430.2 665,427.33 666,427.33 667,427.33 668,427.33 669,427.33 670,424.46 671,427.33 672,424.46 673,427.33 674,427.33 675,427.33 676,430.2 677,430.2 678,433.07 679,433.07 680,433.07 681,430.2 682,427.33 683,424.46 684,421.59 685,418.72 686,415.85 687,415.85 688,415.85 689,415.85 690,418.72 691,424.46 692,430.2 693,433.07 694,438.81 695,441.68 696,444.55 697,444.55 698,441.68 699,435.94 700,430.2 701,421.59 702,415.85 703,410.11 704,404.37 705,401.5 706,404.37 707,407.24 708,415.85 709,424.46 710,433.07 711,441.68 712,450.29 713,456.03 714,458.9 715,456.03 716,450.29 717,441.68 718,430.2 719,415.85 720,404.37 721,395.76 722,390.02 723,390.02 724,392.89 725,401.5 726,412.98 727,424.46 728,438.81 729,453.16 730,461.77 731,467.51 732,467.51 733,461.77 734,453.16 735,441.68 736,424.46 737,410.11 738,398.63 739,387.15 740,384.28 741,384.28 742,390.02 743,401.5 744,412.98 745,430.2 746,444.55 747,458.9 748,467.51 749,470.38 750,470.38 751,461.77 752,450.29 753,435.94 754,421.59 755,407.24 756,395.76 757,387.15 758,384.28 759,387.15 760,392.89 761,404.37 762,418.72 763,433.07 764,447.42 765,456.03 766,461.77 767,464.64 768,461.77 769,456.03 770,444.55 771,433.07 772,418.72 773,407.24 774,401.5 775,395.76 776,395.76 777,398.63 778,404.37 779,412.98 780,424.46 781,433.07 782,441.68 783,447.42 784,453.16 785,453.16 786,450.29 787,444.55 788,435.94 789,427.33 790,421.59 791,412.98 792,410.11 793,407.24 794,407.24 795,410.11 796,415.85 797,421.59 798,427.33 799,433.07 800,435.94 801,438.81 802,438.81 803,438.81 804,435.94 805,433.07 806,430.2 807,427.33 808,424.46 809,421.59 810,418.72 811,418.72 812,421.59 813,421.59 814,424.46 815,424.46 816,427.33 817,427.33 818,430.2 819,430.2 820,430.2 821,430.2 822,430.2 823,427.33 824,430.2 825,430.2 826,427.33 827,427.33 828,430.2 829,430.2 830,427.33 831,430.2 832,427.33 833,427.33 834,430.2 835,427.33 836,427.33 837,430.2 838,427.33 839,430.2 840,430.2 841,427.33 842,427.33 843,430.2 844,430.2 845,430.2 846,427.33 847,427.33 848,427.33 849,427.33 850,427.33 851,427.33 852,427.33 853,427.33 854,430.2 855,430.2 856,433.07 857,433.07 858,430.2 859,430.2 860,427.33 861,424.46 862,421.59 863,418.72 864,415.85 865,415.85 866,415.85 867,418.72 868,421.59 869,427.33 870,430.2 871,435.94 872,441.68 873,444.55 874,444.55 875,441.68 876,438.81 877,433.07 878,427.33 879,418.72 880,412.98 881,407.24 882,404.37 883,404.37 884,407.24 885,410.11 886,418.72 887,427.33 888,438.81 889,447.42 890,453.16 891,456.03 892,456.03 893,453.16 894,444.55 895,435.94 896,421.59 897,410.11 898,401.5 899,392.89 900,390.02 901,390.02 902,395.76 903,407.24 904,418.72 905,433.07 906,447.42 907,456.03 908,464.64 909,467.51" fill="none" stroke="#5cf05c" stroke-width="1.5" stroke-linejoin="miter"/><path d="M288.1,428.2H311.1M466.4,428.2H489.4M644.8,428.2H667.8M823.1,428.2H846.1" stroke="#5cf05c" stroke-width="3"/><path d="M234.5,233V326M270.5,233V326M305.5,233V326M341.5,233V326M376.5,233V326M412.5,233V326M447.5,233V326M483.5,233V326M518.5,233V326M554.5,233V326M589.5,233V326M625.5,233V326M660.5,233V326M696.5,233V326M731.5,233V326M767.5,233V326M802.5,233V326M838.5,233V326M873.5,233V326M199.5,290V233" fill="none" stroke="#f4f4a0" stroke-width="1" shape-rendering="crispEdges"/><path d="M199,233h36v4h-36zM199,230h3v3h-3zM203,230h3v3h-3zM207,230h4v3h-4zM212,230h6v3h-6zM219,230h2v3h-2zM222,230h2v3h-2zM225,230h7v3h-7zM233,230h2v3h-2zM234,322h37v4h-37zM234,326h3v3h-3zM238,326h3v3h-3zM242,326h1v3h-1zM245,326h1v3h-1zM248,326h3v3h-3zM252,326h1v3h-1zM256,326h3v3h-3zM262,326h1v3h-1zM265,326h1v3h-1zM270,233h36v4h-36zM270,230h2v3h-2zM273,230h5v3h-5zM279,230h5v3h-5zM285,230h6v3h-6zM292,230h3v3h-3zM296,230h3v3h-3zM300,230h2v3h-2zM303,230h3v3h-3zM305,322h37v4h-37zM314,326h1v3h-1zM317,326h3v3h-3zM326,326h3v3h-3zM332,326h2v3h-2zM337,326h3v3h-3zM341,233h36v4h-36zM341,230h5v3h-5zM347,230h7v3h-7zM355,230h7v3h-7zM363,230h3v3h-3zM367,230h3v3h-3zM371,230h6v3h-6zM376,322h37v4h-37zM379,326h1v3h-1zM384,326h1v3h-1zM392,326h2v3h-2zM398,326h1v3h-1zM400,326h1v3h-1zM405,326h2v3h-2zM412,233h36v4h-36zM412,230h3v3h-3zM416,230h6v3h-6zM423,230h4v3h-4zM428,230h3v3h-3zM432,230h6v3h-6zM439,230h4v3h-4zM444,230h3v3h-3zM447,322h37v4h-37zM447,326h1v3h-1zM449,326h1v3h-1zM451,326h3v3h-3zM455,326h1v3h-1zM457,326h2v3h-2zM463,326h3v3h-3zM479,326h1v3h-1zM482,326h2v3h-2zM483,233h36v4h-36zM483,230h2v3h-2zM486,230h2v3h-2zM489,230h2v3h-2zM492,230h5v3h-5zM498,230h3v3h-3zM502,230h5v3h-5zM508,230h2v3h-2zM511,230h3v3h-3zM515,230h4v3h-4zM518,322h37v4h-37zM518,326h1v3h-1zM521,326h1v3h-1zM526,326h2v3h-2zM532,326h1v3h-1zM539,326h3v3h-3zM549,326h1v3h-1zM554,233h36v4h-36zM554,230h3v3h-3zM558,230h5v3h-5zM564,230h5v3h-5zM570,230h7v3h-7zM578,230h5v3h-5zM584,230h3v3h-3zM588,230h2v3h-2zM589,322h37v4h-37zM589,326h1v3h-1zM594,326h3v3h-3zM603,326h3v3h-3zM613,326h1v3h-1zM620,326h1v3h-1zM623,326h1v3h-1zM625,233h36v4h-36zM625,230h4v3h-4zM630,230h7v3h-7zM638,230h6v3h-6zM645,230h7v3h-7zM653,230h3v3h-3zM657,230h4v3h-4zM660,322h37v4h-37zM663,326h2v3h-2zM668,326h1v3h-1zM670,326h1v3h-1zM672,326h3v3h-3zM678,326h3v3h-3zM686,326h1v3h-1zM690,326h1v3h-1zM695,326h1v3h-1zM696,233h36v4h-36zM696,230h3v3h-3zM700,230h3v3h-3zM704,230h5v3h-5zM710,230h3v3h-3zM714,230h7v3h-7zM722,230h5v3h-5zM728,230h3v3h-3zM731,322h37v4h-37zM731,326h2v3h-2zM735,326h1v3h-1zM743,326h1v3h-1zM746,326h2v3h-2zM752,326h1v3h-1zM761,326h3v3h-3zM765,326h1v3h-1zM767,233h36v4h-36zM767,230h3v3h-3zM771,230h2v3h-2zM774,230h7v3h-7zM782,230h2v3h-2zM785,230h5v3h-5zM791,230h4v3h-4zM796,230h5v3h-5zM802,322h37v4h-37zM802,326h1v3h-1zM816,326h3v3h-3zM821,326h2v3h-2zM824,326h1v3h-1zM830,326h1v3h-1zM834,326h1v3h-1zM836,326h1v3h-1zM838,233h36v4h-36zM838,230h4v3h-4zM843,230h3v3h-3zM847,230h6v3h-6zM854,230h2v3h-2zM857,230h4v3h-4zM862,230h4v3h-4zM867,230h3v3h-3zM871,230h3v3h-3zM873,322h37v4h-37zM874,326h2v3h-2zM881,326h1v3h-1zM883,326h3v3h-3zM893,326h1v3h-1zM896,326h1v3h-1zM898,326h1v3h-1zM900,326h1v3h-1z" fill="#f8f82a" shape-rendering="crispEdges"/><path d="M168.5,314.2 h21 l8.5,9.5 l-8.5,9.5 h-21z" fill="#8a8a00" stroke="#c8c83c" stroke-width="1.2"/><text x="178.5" y="328.7" text-anchor="middle" font-family="Liberation Sans" font-size="14" fill="#f4f47a">1</text><path d="M168.5,458.0 h21 l8.5,9.5 l-8.5,9.5 h-21z" fill="#0f9010" stroke="#3cc83c" stroke-width="1.2"/><text x="178.5" y="472.5" text-anchor="middle" font-family="Liberation Sans" font-size="14" fill="#70e870">3</text><path d="M168.5,601.2 h21 l8.5,9.5 l-8.5,9.5 h-21z" fill="#8c10a8" stroke="#c040d8" stroke-width="1.2"/><text x="178.5" y="615.7" text-anchor="middle" font-family="Liberation Sans" font-size="14" fill="#e070f0">4</text><path d="M168.5,745.3 h21 l8.5,9.5 l-8.5,9.5 h-21z" fill="#0f98a2" stroke="#3ec8d2" stroke-width="1.2"/><text x="178.5" y="759.8" text-anchor="middle" font-family="Liberation Sans" font-size="14" fill="#8ae8f0">2</text><path d="M890,266.5 l10,-7.5 v15z" fill="#f0f030"/><path d="M899,266.5h9" stroke="#c8c830" stroke-width="1.5"/></svg>
<div style="position:absolute;left:930px;top:166px;width:2px;height:632px;background:#fff;"></div>
<div style="position:absolute;left:939px;top:36px;width:342px;height:799px;background:#dadada;border-right:1px solid #f0f0f0;"></div>
<div style="position:absolute;left:942px;top:45px;width:164px;height:21px;background:#e5e5e5;border-radius:3px;box-shadow:inset 0 0 0 1px #e0e0e0;"></div><div style="position:absolute;left:1108px;top:45px;width:164px;height:21px;background:#e5e5e5;border-radius:3px;box-shadow:inset 0 0 0 1px #e0e0e0;"></div><div style="position:absolute;left:942px;top:68px;width:164px;height:21px;background:#e5e5e5;border-radius:3px;box-shadow:inset 0 0 0 1px #e0e0e0;"></div><div style="position:absolute;left:1108px;top:68px;width:164px;height:21px;background:#e5e5e5;border-radius:3px;box-shadow:inset 0 0 0 1px #e0e0e0;"></div>
<div style="position:absolute;left:824px;width:400px;text-align:center;top:47.88px;font-size:14.5px;line-height:16.67px;color:#000;white-space:pre;">Run / Stop</div><div style="position:absolute;left:990px;width:400px;text-align:center;top:47.88px;font-size:14.5px;line-height:16.67px;color:#000;white-space:pre;">Single</div><div style="position:absolute;left:823.5px;width:400px;text-align:center;top:70.38px;font-size:14.5px;line-height:16.67px;color:#000;white-space:pre;">Force Trig.</div><div style="position:absolute;left:989.5px;width:400px;text-align:center;top:70.38px;font-size:14.5px;line-height:16.67px;color:#000;white-space:pre;">Autoset</div>
<div style="position:absolute;left:942.5px;top:132.38px;font-size:14.5px;line-height:16.67px;color:#000;white-space:pre;">Horizontal</div>
<div style="position:absolute;left:943px;top:151px;width:327px;height:97px;border:1px solid #c6c6c6;border-radius:2px;background:#d6d6d6;"></div>
<div style="position:absolute;left:947.5px;top:158.18px;font-size:14.5px;line-height:16.67px;color:#000;white-space:pre;">Sample Rate</div>
<div style="position:absolute;left:1108px;top:155px;width:159px;height:21px;background:#e4e4e4;border-radius:3px;box-shadow:inset 0 0 0 1px #e0e0e0;"></div><div style="position:absolute;left:987px;width:400px;top:158px;height:21px;text-align:center;font-size:14.5px;line-height:17px;color:#111;white-space:pre;"><span style="display:inline-block;width:22px;"></span>10 MSa/s</div><svg style="position:absolute;left:1254px;top:166px;" width="11" height="6" viewBox="0 0 11 6"><path d="M0.5,0.5 h10 l-5,5z" fill="#2a2a2a"/></svg>
<div style="position:absolute;left:947.5px;top:181.18px;font-size:14.5px;line-height:16.67px;color:#000;white-space:pre;">Time Div</div>
<div style="position:absolute;left:1108px;top:178px;width:159px;height:21px;background:#e4e4e4;border-radius:3px;box-shadow:inset 0 0 0 1px #e0e0e0;"></div><div style="position:absolute;left:986.5px;width:400px;top:181px;height:21px;text-align:center;font-size:14.5px;line-height:17px;color:#111;white-space:pre;"><span style="display:inline-block;width:22px;"></span>100us</div><svg style="position:absolute;left:1254px;top:189px;" width="11" height="6" viewBox="0 0 11 6"><path d="M0.5,0.5 h10 l-5,5z" fill="#2a2a2a"/></svg>
<div style="position:absolute;left:947.5px;top:204.18px;font-size:14.5px;line-height:16.67px;color:#000;white-space:pre;">Horz. Position</div>
<div style="position:absolute;left:1108px;top:201px;width:159px;height:21px;background:#e4e4e4;border-radius:3px;box-shadow:inset 0 0 0 1px #e0e0e0;"></div><div style="position:absolute;left:987px;width:400px;top:204px;height:21px;text-align:center;font-size:14.5px;line-height:17px;color:#111;white-space:pre;"><span style="display:inline-block;width:22px;"></span>+0ps</div><svg style="position:absolute;left:1254px;top:212px;" width="11" height="6" viewBox="0 0 11 6"><path d="M0.5,0.5 h10 l-5,5z" fill="#2a2a2a"/></svg>
<div style="position:absolute;left:947.5px;top:227.18px;font-size:14.5px;line-height:16.67px;color:#000;white-space:pre;">Rec. Length</div>
<div style="position:absolute;left:1108px;top:224px;width:159px;height:21px;background:#e4e4e4;border-radius:3px;box-shadow:inset 0 0 0 1px #e0e0e0;"></div><div style="position:absolute;left:980.5px;width:400px;text-align:center;top:227.18px;font-size:14.5px;line-height:16.67px;color:#000;white-space:pre;">10 K</div><svg style="position:absolute;left:1254px;top:235px;" width="11" height="6" viewBox="0 0 11 6"><path d="M0.5,0.5 h10 l-5,5z" fill="#2a2a2a"/></svg>
<svg style="position:absolute;left:1146px;top:158px;" width="20" height="16" viewBox="0 0 20 16"><rect x="0.7" y="0.7" width="11" height="14.3" rx="4" fill="none" stroke="#111" stroke-width="1.2"/><path d="M3.5,4h5M3.5,6.3h5M3.5,8.6h5" stroke="#111" stroke-width="1"/><path d="M13,5.5 l2.75,-4 l2.75,4z M13,10.5 l2.75,4 l2.75,-4z" fill="#111"/></svg><svg style="position:absolute;left:1155.5px;top:181px;" width="20" height="16" viewBox="0 0 20 16"><rect x="0.7" y="0.7" width="11" height="14.3" rx="4" fill="none" stroke="#111" stroke-width="1.2"/><path d="M3.5,4h5M3.5,6.3h5M3.5,8.6h5" stroke="#111" stroke-width="1"/><path d="M13,5.5 l2.75,-4 l2.75,4z M13,10.5 l2.75,4 l2.75,-4z" fill="#111"/></svg><svg style="position:absolute;left:1160px;top:204px;" width="20" height="16" viewBox="0 0 20 16"><rect x="0.7" y="0.7" width="11" height="14.3" rx="4" fill="none" stroke="#111" stroke-width="1.2"/><path d="M3.5,4h5M3.5,6.3h5M3.5,8.6h5" stroke="#111" stroke-width="1"/><path d="M13,5.5 l2.75,-4 l2.75,4z M13,10.5 l2.75,4 l2.75,-4z" fill="#111"/></svg>
<div style="position:absolute;left:942.5px;top:292.88px;font-size:14.5px;line-height:16.67px;color:#000;white-space:pre;">Trigger</div>
<div style="position:absolute;left:943px;top:311px;width:327px;height:146px;border:1px solid #c6c6c6;border-radius:2px;background:#d6d6d6;"></div>
<div style="position:absolute;left:947px;top:315px;width:320px;height:21px;background:#e4e4e4;border-radius:3px;box-shadow:inset 0 0 0 1px #e0e0e0;"></div><div style="position:absolute;left:898.8px;width:400px;text-align:center;top:318.18px;font-size:14.5px;line-height:16.67px;color:#000;white-space:pre;">Edge</div><svg style="position:absolute;left:1254px;top:326px;" width="11" height="6" viewBox="0 0 11 6"><path d="M0.5,0.5 h10 l-5,5z" fill="#2a2a2a"/></svg>
<div style="position:absolute;left:947.5px;top:341.18px;font-size:14.5px;line-height:16.67px;color:#000;white-space:pre;">Source</div><div style="position:absolute;left:1108px;top:338px;width:159px;height:21px;background:#e4e4e4;border-radius:3px;box-shadow:inset 0 0 0 1px #e0e0e0;"></div><div style="position:absolute;left:978.8px;width:400px;text-align:center;top:341.18px;font-size:14.5px;line-height:16.67px;color:#000;white-space:pre;">CH 1</div><svg style="position:absolute;left:1254px;top:349px;" width="11" height="6" viewBox="0 0 11 6"><path d="M0.5,0.5 h10 l-5,5z" fill="#2a2a2a"/></svg>
<div style="position:absolute;left:1108px;top:361px;width:159px;height:21px;background:#e4e4e4;border-radius:3px;box-shadow:inset 0 0 0 1px #e0e0e0;"></div><div style="position:absolute;left:987px;width:400px;top:364px;height:21px;text-align:center;font-size:14.5px;line-height:17px;color:#111;white-space:pre;"><span style="display:inline-block;width:22px;"></span>1.6V</div><svg style="position:absolute;left:1161px;top:364px;" width="20" height="16" viewBox="0 0 20 16"><rect x="0.7" y="0.7" width="11" height="14.3" rx="4" fill="none" stroke="#111" stroke-width="1.2"/><path d="M3.5,4h5M3.5,6.3h5M3.5,8.6h5" stroke="#111" stroke-width="1"/><path d="M13,5.5 l2.75,-4 l2.75,4z M13,10.5 l2.75,4 l2.75,-4z" fill="#111"/></svg>
<div style="position:absolute;left:947.5px;top:387.18px;font-size:14.5px;line-height:16.67px;color:#000;white-space:pre;">Slope</div><div style="position:absolute;left:1108px;top:384px;width:159px;height:21px;background:#e4e4e4;border-radius:3px;box-shadow:inset 0 0 0 1px #e0e0e0;"></div><div style="position:absolute;left:979.4px;width:400px;text-align:center;top:387.18px;font-size:14.5px;line-height:16.67px;color:#000;white-space:pre;">Rising</div><svg style="position:absolute;left:1254px;top:395px;" width="11" height="6" viewBox="0 0 11 6"><path d="M0.5,0.5 h10 l-5,5z" fill="#2a2a2a"/></svg>
<div style="position:absolute;left:947.5px;top:410.18px;font-size:14.5px;line-height:16.67px;color:#000;white-space:pre;">Mode</div><div style="position:absolute;left:1108px;top:407px;width:159px;height:21px;background:#e4e4e4;border-radius:3px;box-shadow:inset 0 0 0 1px #e0e0e0;"></div><div style="position:absolute;left:979.4px;width:400px;text-align:center;top:410.18px;font-size:14.5px;line-height:16.67px;color:#000;white-space:pre;">Auto</div><svg style="position:absolute;left:1254px;top:418px;" width="11" height="6" viewBox="0 0 11 6"><path d="M0.5,0.5 h10 l-5,5z" fill="#2a2a2a"/></svg>
<div style="position:absolute;left:1108px;top:430px;width:159px;height:25px;background:#e4e4e4;border-radius:3px;box-shadow:inset 0 0 0 1px #e0e0e0;"></div>
<svg style="position:absolute;left:1128px;top:434px;" width="18" height="18" viewBox="0 0 18 18"><rect x="1.0" y="1.0" width="4" height="4" fill="#2a6cc0"/><rect x="1.0" y="6.5" width="4" height="4" fill="#2a6cc0"/><rect x="1.0" y="12.0" width="4" height="4" fill="#2a6cc0"/><rect x="6.5" y="1.0" width="4" height="4" fill="#2a6cc0"/><rect x="6.5" y="6.5" width="4" height="4" fill="#2a6cc0"/><rect x="6.5" y="12.0" width="4" height="4" fill="#2a6cc0"/><rect x="12.0" y="1.0" width="4" height="4" fill="#2a6cc0"/><rect x="12.0" y="6.5" width="4" height="4" fill="#2a6cc0"/><rect x="12.0" y="12.0" width="4" height="4" fill="#2a6cc0"/></svg>
<div style="position:absolute;left:1148px;top:435.38px;font-size:14.5px;line-height:16.67px;color:#000;white-space:pre;">Adv. Settings...</div>
<div style="position:absolute;left:982px;top:511px;width:84px;height:21px;background:#e4e4e4;border-radius:3px;box-shadow:inset 0 0 0 1px #e0e0e0;"></div><div style="position:absolute;left:824px;width:400px;text-align:center;top:513.88px;font-size:14.5px;line-height:16.67px;color:#000;white-space:pre;">Digital</div>
<div style="position:absolute;left:982px;top:537px;width:84px;height:21px;background:#e4e4e4;border-radius:3px;box-shadow:inset 0 0 0 1px #e0e0e0;"></div><div style="position:absolute;left:824px;width:400px;text-align:center;top:539.88px;font-size:14.5px;line-height:16.67px;color:#000;white-space:pre;">Math</div>
<div style="position:absolute;left:982px;top:563px;width:84px;height:21px;background:#e4e4e4;border-radius:3px;box-shadow:inset 0 0 0 1px #e0e0e0;"></div><div style="position:absolute;left:824px;width:400px;text-align:center;top:565.88px;font-size:14.5px;line-height:16.67px;color:#000;white-space:pre;">FFT</div>
<div style="position:absolute;left:982px;top:589px;width:84px;height:21px;background:#e4e4e4;border-radius:3px;box-shadow:inset 0 0 0 1px #e0e0e0;"></div><div style="position:absolute;left:824px;width:400px;text-align:center;top:591.88px;font-size:14.5px;line-height:16.67px;color:#000;white-space:pre;">Decode</div>
<div style="position:absolute;left:1132px;top:500px;width:69px;height:40px;background:#8e8e8e;border-radius:4px;"></div>
<div style="position:absolute;left:1137px;top:506px;width:28px;height:28px;background:#ffff00;border:1px solid #111;"></div>
<div style="position:absolute;left:1137px;top:505px;width:30px;height:30px;text-align:center;font-weight:bold;font-size:27px;line-height:31px;color:#000;letter-spacing:0px;-webkit-text-stroke:0.7px #000;">1</div>
<div style="position:absolute;left:1177.5px;top:507.05px;font-size:11px;line-height:12.65px;color:#bdbdbd;white-space:pre;">BW</div><div style="position:absolute;left:1178.5px;top:524.04px;font-size:11px;line-height:12.65px;color:#f0a040;white-space:pre;">DC</div>
<div style="position:absolute;left:1202px;top:500px;width:69px;height:40px;background:#e2e2e2;border-radius:2px;"></div>
<div style="position:absolute;left:1207px;top:506px;width:28px;height:28px;background:#00ffff;border:1px solid #111;"></div>
<div style="position:absolute;left:1207px;top:505px;width:30px;height:30px;text-align:center;font-weight:bold;font-size:27px;line-height:31px;color:#000;letter-spacing:0px;-webkit-text-stroke:0.7px #000;">2</div>
<div style="position:absolute;left:1247.5px;top:507.05px;font-size:11px;line-height:12.65px;color:#b4b4b4;white-space:pre;">BW</div><div style="position:absolute;left:1248.5px;top:524.04px;font-size:11px;line-height:12.65px;color:#f0a040;white-space:pre;">DC</div>
<div style="position:absolute;left:1132px;top:541px;width:69px;height:40px;background:#e2e2e2;border-radius:2px;"></div>
<div style="position:absolute;left:1137px;top:547px;width:28px;height:28px;background:#00ff00;border:1px solid #111;"></div>
<div style="position:absolute;left:1137px;top:546px;width:30px;height:30px;text-align:center;font-weight:bold;font-size:27px;line-height:31px;color:#000;letter-spacing:0px;-webkit-text-stroke:0.7px #000;">3</div>
<div style="position:absolute;left:1177.5px;top:548.04px;font-size:11px;line-height:12.65px;color:#b4b4b4;white-space:pre;">BW</div><div style="position:absolute;left:1178.5px;top:565.04px;font-size:11px;line-height:12.65px;color:#f0a040;white-space:pre;">DC</div>
<div style="position:absolute;left:1202px;top:541px;width:69px;height:40px;background:#e2e2e2;border-radius:2px;"></div>
<div style="position:absolute;left:1207px;top:547px;width:28px;height:28px;background:#ff00ff;border:1px solid #111;"></div>
<div style="position:absolute;left:1207px;top:546px;width:30px;height:30px;text-align:center;font-weight:bold;font-size:27px;line-height:31px;color:#000;letter-spacing:0px;-webkit-text-stroke:0.7px #000;">4</div>
<div style="position:absolute;left:1247.5px;top:548.04px;font-size:11px;line-height:12.65px;color:#b4b4b4;white-space:pre;">BW</div><div style="position:absolute;left:1248.5px;top:565.04px;font-size:11px;line-height:12.65px;color:#f0a040;white-space:pre;">DC</div>
<div style="position:absolute;left:1132px;top:582px;width:69px;height:40px;background:#e2e2e2;border-radius:2px;"></div>
<div style="position:absolute;left:1137px;top:588px;width:28px;height:28px;background:#a2a2a2;border:1px solid #555;"></div>
<div style="position:absolute;left:1137px;top:587px;width:30px;height:30px;text-align:center;font-weight:bold;font-size:27px;line-height:31px;color:#4a4a4a;letter-spacing:0px;-webkit-text-stroke:0.7px #4a4a4a;">5</div>
<div style="position:absolute;left:1177.5px;top:589.04px;font-size:11px;line-height:12.65px;color:#cfcfcf;white-space:pre;">BW</div><div style="position:absolute;left:1178.5px;top:606.04px;font-size:11px;line-height:12.65px;color:#c8c8c8;white-space:pre;">DC</div>
<div style="position:absolute;left:1202px;top:582px;width:69px;height:40px;background:#e2e2e2;border-radius:2px;"></div>
<div style="position:absolute;left:1207px;top:588px;width:28px;height:28px;background:#a2a2a2;border:1px solid #555;"></div>
<div style="position:absolute;left:1207px;top:587px;width:30px;height:30px;text-align:center;font-weight:bold;font-size:27px;line-height:31px;color:#4a4a4a;letter-spacing:0px;-webkit-text-stroke:0.7px #4a4a4a;">6</div>
<div style="position:absolute;left:1247.5px;top:589.04px;font-size:11px;line-height:12.65px;color:#cfcfcf;white-space:pre;">BW</div><div style="position:absolute;left:1248.5px;top:606.04px;font-size:11px;line-height:12.65px;color:#c8c8c8;white-space:pre;">DC</div>
<div style="position:absolute;left:1132px;top:623px;width:69px;height:40px;background:#e2e2e2;border-radius:2px;"></div>
<div style="position:absolute;left:1137px;top:629px;width:28px;height:28px;background:#a2a2a2;border:1px solid #555;"></div>
<div style="position:absolute;left:1137px;top:628px;width:30px;height:30px;text-align:center;font-weight:bold;font-size:27px;line-height:31px;color:#4a4a4a;letter-spacing:0px;-webkit-text-stroke:0.7px #4a4a4a;">7</div>
<div style="position:absolute;left:1177.5px;top:630.04px;font-size:11px;line-height:12.65px;color:#cfcfcf;white-space:pre;">BW</div><div style="position:absolute;left:1178.5px;top:647.04px;font-size:11px;line-height:12.65px;color:#c8c8c8;white-space:pre;">DC</div>
<div style="position:absolute;left:1202px;top:623px;width:69px;height:40px;background:#e2e2e2;border-radius:2px;"></div>
<div style="position:absolute;left:1207px;top:629px;width:28px;height:28px;background:#a2a2a2;border:1px solid #555;"></div>
<div style="position:absolute;left:1207px;top:628px;width:30px;height:30px;text-align:center;font-weight:bold;font-size:27px;line-height:31px;color:#4a4a4a;letter-spacing:0px;-webkit-text-stroke:0.7px #4a4a4a;">8</div>
<div style="position:absolute;left:1247.5px;top:630.04px;font-size:11px;line-height:12.65px;color:#cfcfcf;white-space:pre;">BW</div><div style="position:absolute;left:1248.5px;top:647.04px;font-size:11px;line-height:12.65px;color:#c8c8c8;white-space:pre;">DC</div>
<div style="position:absolute;left:1132px;top:664px;width:69px;height:40px;background:#e2e2e2;border-radius:2px;"></div>
<div style="position:absolute;left:1137px;top:670px;width:28px;height:28px;background:#a2a2a2;border:1px solid #555;"></div>
<div style="position:absolute;left:1137px;top:669px;width:30px;height:30px;text-align:center;font-weight:bold;font-size:27px;line-height:31px;color:#4a4a4a;letter-spacing:0px;-webkit-text-stroke:0.7px #4a4a4a;">9</div>
<div style="position:absolute;left:1177.5px;top:671.04px;font-size:11px;line-height:12.65px;color:#cfcfcf;white-space:pre;">BW</div><div style="position:absolute;left:1178.5px;top:688.04px;font-size:11px;line-height:12.65px;color:#c8c8c8;white-space:pre;">DC</div>
<div style="position:absolute;left:1202px;top:664px;width:69px;height:40px;background:#e2e2e2;border-radius:2px;"></div>
<div style="position:absolute;left:1207px;top:670px;width:28px;height:28px;background:#a2a2a2;border:1px solid #555;"></div>
<div style="position:absolute;left:1207px;top:669px;width:30px;height:30px;text-align:center;font-weight:bold;font-size:24px;line-height:31px;color:#4a4a4a;letter-spacing:-0.8px;-webkit-text-stroke:0.7px #4a4a4a;">10</div>
<div style="position:absolute;left:1247.5px;top:671.04px;font-size:11px;line-height:12.65px;color:#cfcfcf;white-space:pre;">BW</div><div style="position:absolute;left:1248.5px;top:688.04px;font-size:11px;line-height:12.65px;color:#c8c8c8;white-space:pre;">DC</div>
<div style="position:absolute;left:1132px;top:705px;width:69px;height:40px;background:#e2e2e2;border-radius:2px;"></div>
<div style="position:absolute;left:1137px;top:711px;width:28px;height:28px;background:#a2a2a2;border:1px solid #555;"></div>
<div style="position:absolute;left:1137px;top:710px;width:30px;height:30px;text-align:center;font-weight:bold;font-size:24px;line-height:31px;color:#4a4a4a;letter-spacing:-0.8px;-webkit-text-stroke:0.7px #4a4a4a;">11</div>
<div style="position:absolute;left:1177.5px;top:712.04px;font-size:11px;line-height:12.65px;color:#cfcfcf;white-space:pre;">BW</div><div style="position:absolute;left:1178.5px;top:729.04px;font-size:11px;line-height:12.65px;color:#c8c8c8;white-space:pre;">DC</div>
<div style="position:absolute;left:1202px;top:705px;width:69px;height:40px;background:#e2e2e2;border-radius:2px;"></div>
<div style="position:absolute;left:1207px;top:711px;width:28px;height:28px;background:#a2a2a2;border:1px solid #555;"></div>
<div style="position:absolute;left:1207px;top:710px;width:30px;height:30px;text-align:center;font-weight:bold;font-size:24px;line-height:31px;color:#4a4a4a;letter-spacing:-0.8px;-webkit-text-stroke:0.7px #4a4a4a;">12</div>
<div style="position:absolute;left:1247.5px;top:712.04px;font-size:11px;line-height:12.65px;color:#cfcfcf;white-space:pre;">BW</div><div style="position:absolute;left:1248.5px;top:729.04px;font-size:11px;line-height:12.65px;color:#c8c8c8;white-space:pre;">DC</div>
<div style="position:absolute;left:1132px;top:746px;width:69px;height:40px;background:#e2e2e2;border-radius:2px;"></div>
<div style="position:absolute;left:1137px;top:752px;width:28px;height:28px;background:#a2a2a2;border:1px solid #555;"></div>
<div style="position:absolute;left:1137px;top:751px;width:30px;height:30px;text-align:center;font-weight:bold;font-size:24px;line-height:31px;color:#4a4a4a;letter-spacing:-0.8px;-webkit-text-stroke:0.7px #4a4a4a;">13</div>
<div style="position:absolute;left:1177.5px;top:753.04px;font-size:11px;line-height:12.65px;color:#cfcfcf;white-space:pre;">BW</div><div style="position:absolute;left:1178.5px;top:770.04px;font-size:11px;line-height:12.65px;color:#c8c8c8;white-space:pre;">DC</div>
<div style="position:absolute;left:1202px;top:746px;width:69px;height:40px;background:#e2e2e2;border-radius:2px;"></div>
<div style="position:absolute;left:1207px;top:752px;width:28px;height:28px;background:#a2a2a2;border:1px solid #555;"></div>
<div style="position:absolute;left:1207px;top:751px;width:30px;height:30px;text-align:center;font-weight:bold;font-size:24px;line-height:31px;color:#4a4a4a;letter-spacing:-0.8px;-webkit-text-stroke:0.7px #4a4a4a;">14</div>
<div style="position:absolute;left:1247.5px;top:753.04px;font-size:11px;line-height:12.65px;color:#cfcfcf;white-space:pre;">BW</div><div style="position:absolute;left:1248.5px;top:770.04px;font-size:11px;line-height:12.65px;color:#c8c8c8;white-space:pre;">DC</div>
<div style="position:absolute;left:1132px;top:787px;width:69px;height:40px;background:#e2e2e2;border-radius:2px;"></div>
<div style="position:absolute;left:1137px;top:793px;width:28px;height:28px;background:#a2a2a2;border:1px solid #555;"></div>
<div style="position:absolute;left:1137px;top:792px;width:30px;height:30px;text-align:center;font-weight:bold;font-size:24px;line-height:31px;color:#4a4a4a;letter-spacing:-0.8px;-webkit-text-stroke:0.7px #4a4a4a;">15</div>
<div style="position:absolute;left:1177.5px;top:794.04px;font-size:11px;line-height:12.65px;color:#cfcfcf;white-space:pre;">BW</div><div style="position:absolute;left:1178.5px;top:811.04px;font-size:11px;line-height:12.65px;color:#c8c8c8;white-space:pre;">DC</div>
<div style="position:absolute;left:1202px;top:787px;width:69px;height:40px;background:#e2e2e2;border-radius:2px;"></div>
<div style="position:absolute;left:1207px;top:793px;width:28px;height:28px;background:#a2a2a2;border:1px solid #555;"></div>
<div style="position:absolute;left:1207px;top:792px;width:30px;height:30px;text-align:center;font-weight:bold;font-size:24px;line-height:31px;color:#4a4a4a;letter-spacing:-0.8px;-webkit-text-stroke:0.7px #4a4a4a;">16</div>
<div style="position:absolute;left:1247.5px;top:794.04px;font-size:11px;line-height:12.65px;color:#cfcfcf;white-space:pre;">BW</div><div style="position:absolute;left:1248.5px;top:811.04px;font-size:11px;line-height:12.65px;color:#c8c8c8;white-space:pre;">DC</div>
<div style="position:absolute;left:981px;top:731px;width:40px;height:40px;background:#e0e0e0;border-radius:3px;"></div><svg style="position:absolute;left:985px;top:735px;" width="32" height="32" viewBox="0 0 32 32" shape-rendering="crispEdges"><rect x="0" y="0" width="32" height="32" fill="#000"/><rect x="0.5" y="0.5" width="31" height="31" fill="none" stroke="#3a3a3a"/><path d="M1.5,3.5H2.5V7.5H5.5V3.5H6.5V7.5H9.5V3.5H10.5V7.5H13.5V3.5H14.5V7.5H17.5V3.5H18.5V7.5H21.5V3.5H22.5V7.5H25.5V3.5H26.5V7.5H29.5V3.5H31.5V7.5" fill="none" stroke="#f0f070" stroke-width="1" shape-rendering="crispEdges"/><path d="M1,12.5h30" stroke="#70c8e0" stroke-dasharray="3,2"/><path d="M1.5,17.5H2.5V22.5H5.5V17.5H6.5V22.5H9.5V17.5H10.5V22.5H12.5V17.5H15.5V22.5H18.5V17.5H19.5V22.5H22.5V17.5H23.5V22.5H26.5V17.5H28.5V22.5" fill="none" stroke="#60f060" stroke-width="1" shape-rendering="crispEdges"/><path d="M1,26.5h30" stroke="#c040d0"/><path d="M1,27.5h30" stroke="#7a2088"/><path d="M1,28.5h30" stroke="#3a1040"/></svg>
<div style="position:absolute;left:1026px;top:731px;width:40px;height:40px;background:#e0e0e0;border-radius:3px;"></div><svg style="position:absolute;left:1030px;top:735px;" width="32" height="32" viewBox="0 0 32 32" shape-rendering="crispEdges"><rect x="0" y="0" width="32" height="32" fill="#000"/><rect x="0.5" y="0.5" width="31" height="31" fill="none" stroke="#3a3a3a"/><rect x="15" y="0" width="2" height="32" fill="#a8a8a8"/><path d="M1.5,14.5H3.5V19.5H5.5V14.5H7.5V19.5H9.5V14.5H11.5V19.5H12.5V14.5H13.5V19.5H14.5V14.5H16.5V19.5" fill="none" stroke="#60f060" stroke-width="1" shape-rendering="crispEdges"/><path d="M17,16.5h14" stroke="#c040d0"/><path d="M17,17.5h14" stroke="#6a1878"/></svg>
<div style="position:absolute;left:981px;top:776px;width:40px;height:40px;background:#e0e0e0;border-radius:3px;"></div><svg style="position:absolute;left:985px;top:780px;" width="32" height="32" viewBox="0 0 32 32" shape-rendering="crispEdges"><rect x="0" y="0" width="32" height="32" fill="#000"/><rect x="0.5" y="0.5" width="31" height="31" fill="none" stroke="#3a3a3a"/><path d="M1.5,6.5H2.5V10.5H5.5V6.5H6.5V10.5H9.5V6.5H10.5V10.5H13.5V6.5H14.5V10.5H17.5V6.5H18.5V10.5H19.5V6.5H22.5V10.5H23.5V6.5H26.5V10.5H27.5V6.5H29.5V10.5" fill="none" stroke="#f0f070" stroke-width="1" shape-rendering="crispEdges"/><rect x="0" y="15" width="32" height="2" fill="#a8a8a8"/><path d="M1,24.5h30" stroke="#70c8e0" stroke-dasharray="3,2"/></svg>
<div style="position:absolute;left:1026px;top:776px;width:40px;height:40px;background:#e0e0e0;border-radius:3px;"></div><svg style="position:absolute;left:1030px;top:780px;" width="32" height="32" viewBox="0 0 32 32" shape-rendering="crispEdges"><rect x="0" y="0" width="32" height="32" fill="#000"/><rect x="0.5" y="0.5" width="31" height="31" fill="none" stroke="#3a3a3a"/><rect x="15" y="0" width="2" height="32" fill="#a8a8a8"/><rect x="0" y="15" width="32" height="2" fill="#a8a8a8"/><path d="M1.5,8.5H2.5V12.5H5.5V8.5H6.5V12.5H9.5V8.5H10.5V12.5H13.5V8.5H14.5V12.5" fill="none" stroke="#f0f070" stroke-width="1" shape-rendering="crispEdges"/><path d="M17,9.5h14" stroke="#70c8e0" stroke-dasharray="3,2"/><path d="M1.5,21.5H3.5V26.5H5.5V21.5H7.5V26.5H9.5V21.5H11.5V26.5H12.5V21.5H13.5V26.5H14.5V21.5H16.5V26.5" fill="none" stroke="#60f060" stroke-width="1" shape-rendering="crispEdges"/><path d="M17,27.5h14" stroke="#c040d0"/><path d="M17,28.5h14" stroke="#6a1878"/></svg></body></html>
